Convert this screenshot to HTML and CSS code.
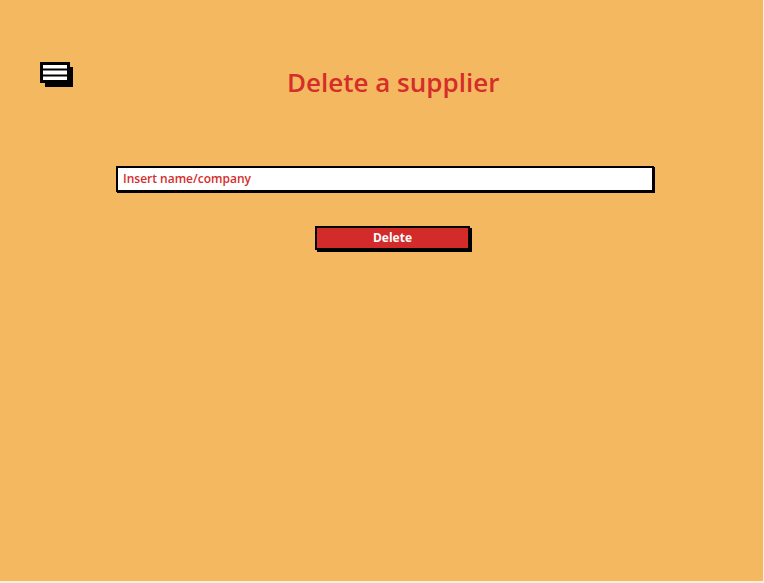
FILE: index.html
```html
<!DOCTYPE html>
<html>
<head>
<meta charset="utf-8">
<link rel="stylesheet" href="styles.css">
</head>
<body>
<div class="page">
  <header class="header">
    <div class="menu-icon">
      <svg width="34" height="26" viewBox="0 0 34 26">
        <rect x="5" y="5" width="28" height="20" fill="#000"/>
        <rect x="1.5" y="1.5" width="27" height="18" fill="#fff" stroke="#000" stroke-width="3"/>
        <rect x="3" y="6.5" width="24" height="2" fill="#000"/>
        <rect x="3" y="12.5" width="24" height="2" fill="#000"/>
      </svg>
    </div>
    <h1 class="title">Delete a supplier</h1>
  </header>
  <main class="form">
    <div class="field">Insert name/company</div>
    <button class="btn">Delete</button>
  </main>
</div>
</body>
</html>
```
FILE: styles.css
```css
html, body {
  margin: 0;
  padding: 0;
  background: #fdf1dc;
}
.page {
  width: 763px;
  height: 581px;
  background: #f4b860;
  font-family: "Open Sans", "Liberation Sans", sans-serif;
  position: relative;
}
.header {
  display: flex;
  align-items: flex-start;
  padding: 62px 0 0 40px;
  height: 104px;
  box-sizing: border-box;
}
.menu-icon {
  width: 34px;
  height: 26px;
}
.menu-icon svg { display: block; }
.title {
  margin: 2px 0 0 213px;
  font-size: 26px;
  font-weight: 600;
  color: #d42d2a;
  letter-spacing: 0;
  line-height: 36px;
}
.form {
  display: flex;
  flex-direction: column;
  align-items: flex-start;
  padding: 62px 0 0 116px;
}
.field {
  width: 529px;
  height: 22px;
  background: #fff;
  border: 2px solid #000;
  box-shadow: 1px 1px 0 #000;
  color: #d42d2a;
  font-size: 12px;
  font-weight: 600;
  line-height: 22px;
  padding-left: 5px;
}
.btn {
  margin: 34px 0 0 199px;
  width: 155px;
  height: 24px;
  background: #d22b2a;
  border: 2px solid #000;
  box-shadow: 2px 2px 0 #000;
  color: #fff;
  font-family: "Open Sans", "Liberation Sans", sans-serif;
  font-size: 12px;
  font-weight: 700;
  padding: 0;
  line-height: 20px;
}
```
